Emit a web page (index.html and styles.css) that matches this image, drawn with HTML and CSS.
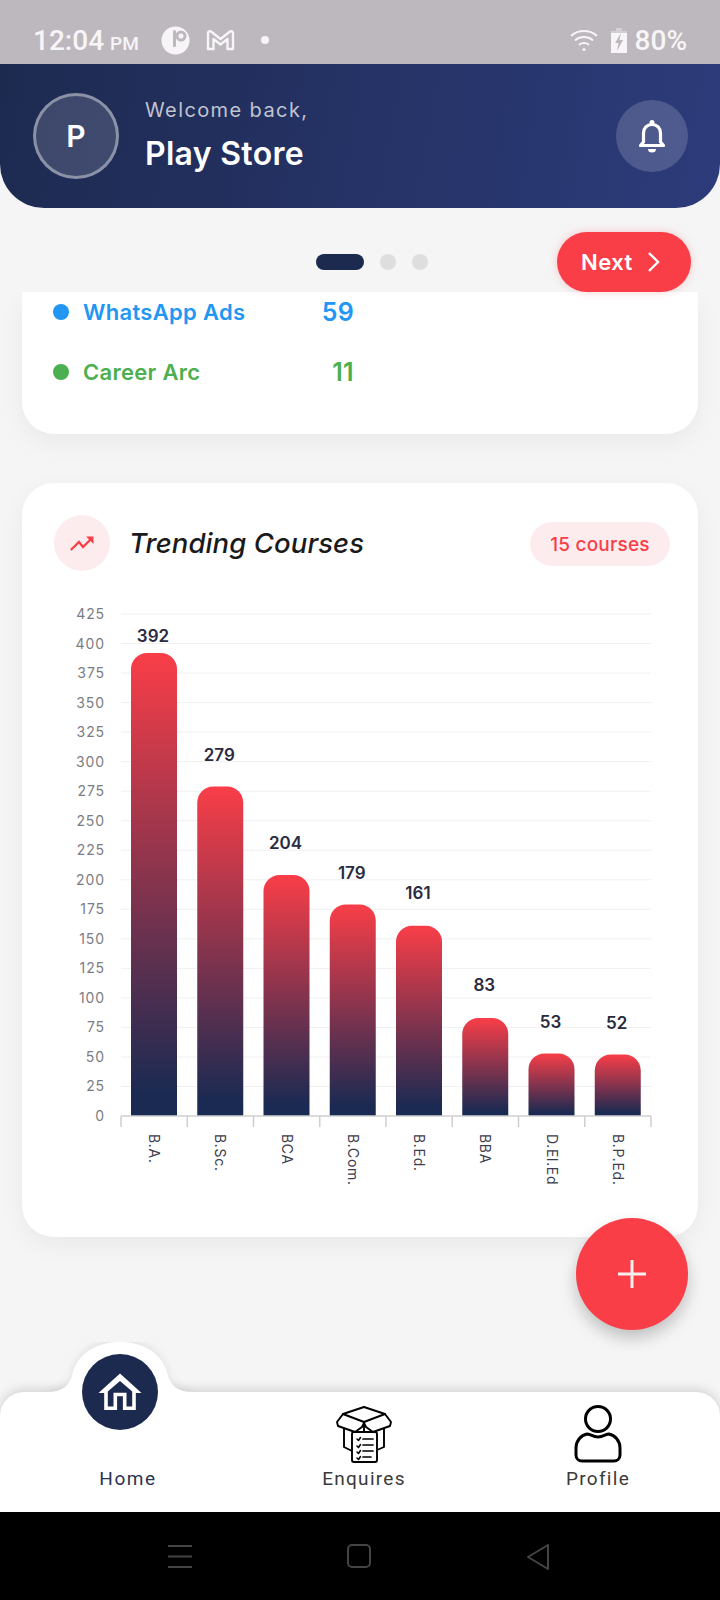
FILE: index.html
```html
<!DOCTYPE html>
<html lang="en">
<head>
<meta charset="utf-8">
<title>Dashboard</title>
<link rel="stylesheet" href="styles.css">
</head>
<body>
<div class="app">
  <div class="status">
    <div class="status-left">
      <span class="time">12:04<small>PM</small></span>
      <svg class="st-icon" width="29" height="29" viewBox="0 0 29 29"><circle cx="14.5" cy="14.5" r="14" fill="#f7f5f7"/><rect x="12" y="4" width="3" height="17" rx="1.5" fill="#bdb8bd"/><circle cx="20" cy="10" r="5.5" fill="#bdb8bd"/><circle cx="20" cy="10" r="2.5" fill="#f7f5f7"/></svg>
      <svg class="st-icon" width="29" height="22" viewBox="0 0 29 22"><path d="M2 20V4.500Q2 1.500 5 2.500L14.500 10 24 2.500Q27 1.500 27 4.500V20H21.500V10L14.500 15.500 7.500 10V20z" fill="none" stroke="#f7f5f7" stroke-width="2.400" stroke-linejoin="round"/></svg>
      <span class="st-dot"></span>
    </div>
    <div class="status-right">
      <svg width="28" height="24" viewBox="0 0 28 24" fill="none" stroke="#f7f5f7" stroke-width="1.800" stroke-linecap="round"><path d="M1.500 7.500C8 1.500 20 1.500 26.500 7.500"/><path d="M5.500 12C10 8 18 8 22.500 12"/><path d="M9.500 16.500C12 14.500 16 14.500 18.500 16.500"/><circle cx="14" cy="21.500" r="1.500" fill="#f7f5f7" stroke="none"/></svg>
      <svg width="16" height="25" viewBox="0 0 16 25"><path d="M5 0h6v3h5v2H0V3h5z" fill="#d3cfd3"/><path d="M0 5h16v20H0z" fill="#f7f5f7"/><path d="M10 5L4 15h3.500L6 23l6-11H8.500z" fill="#bdb8bd"/></svg>
      <span class="battery">80%</span>
    </div>
  </div>

  <header class="hero">
    <div class="avatar">P</div>
    <div class="greeting">
      <div class="welcome">Welcome back,</div>
      <div class="name">Play Store</div>
    </div>
    <button class="bell" type="button" aria-label="Notifications">
      <svg width="26" height="33" viewBox="0 0 26 33" fill="none" stroke="#fff" stroke-width="3.200" stroke-linejoin="round"><path d="M4.500 22V13C4.500 8 8 4.500 13 4.500S21.500 8 21.500 13V22L24.500 25.500H1.500z"/><circle cx="13" cy="2.500" r="2.500" fill="#fff" stroke="none"/><path d="M9 29h8a4 3.500 0 0 1-8 0z" fill="#fff" stroke="none"/></svg>
    </button>
  </header>

  <div class="pager">
    <div class="dots">
      <span class="dot dot-active"></span>
      <span class="dot"></span>
      <span class="dot"></span>
    </div>
    <button class="next" type="button">Next
      <svg width="14" height="22" viewBox="0 0 14 22" fill="none" stroke="#fff" stroke-width="2.400"><path d="M2 2l9 9-9 9"/></svg>
    </button>
  </div>

  <main class="scroll">
    <section class="card card-sources">
      <div class="source source-blue"><span class="bullet"></span><span class="source-name">WhatsApp Ads</span><span class="source-num">59</span></div>
      <div class="source source-green"><span class="bullet"></span><span class="source-name">Career Arc</span><span class="source-num">11</span></div>
    </section>

    <section class="card card-trending">
      <div class="card-head">
        <span class="trend-icon">
          <svg width="24" height="15" viewBox="0 0 24 15"><path d="M.8 14L9 6l4 5 8.500-8.500" fill="none" stroke="#f93e48" stroke-width="2.200"/><path d="M16 .5h7.500V8z" fill="#f93e48"/></svg>
        </span>
        <h2 class="card-title">Trending Courses</h2>
        <span class="pill">15 courses</span>
      </div>
      <svg class="chart" width="676" height="620" viewBox="0 0 676 620">
        <defs>
          <linearGradient id="barFill" x1="0" y1="0" x2="0" y2="1">
            <stop offset="0" stop-color="#f93e48"/>
            <stop offset=".95" stop-color="#1b2a52"/>
          </linearGradient>
        </defs>
        <g id="grid" class="grid"></g>
        <g id="yLabels" class="y-label"></g>
        <g id="bars"></g>
        <g id="ticks" class="tick"></g>
        <g id="vals" class="val"></g>
        <g id="xLabels" class="x-label"></g>
      </svg>
    </section>
  </main>

  <button class="fab" type="button" aria-label="Add">
    <svg width="28" height="28" viewBox="0 0 28 28" fill="#f7eeee"><rect x="12.500" y="0" width="3" height="28"/><rect x="0" y="12.500" width="28" height="3"/></svg>
  </button>

  <nav class="tabs">
    <svg class="bump" width="240" height="50" viewBox="0 0 240 50"><path class="bump-shape" d="M18 50c14 0 22-6 25-20C49 10 68 0 90 0s41 10 47 30c3 14 11 20 25 20v4H18z" fill="#fff"/></svg>
    <div class="home-disc">
      <svg width="44" height="38" viewBox="0 0 44 38"><path d="M22 .5L43.500 20H36L22 8 8 20H.5z" fill="#fff"/><path d="M8 17V35.200H17.300V21.500H26.700V35.200H36V17" fill="none" stroke="#fff" stroke-width="3.600"/></svg>
    </div>
    <a class="tab tab-home"><span class="tab-label">Home</span></a>
    <a class="tab">
      <svg width="58" height="58" viewBox="0 0 58 58" fill="none" stroke="#000" stroke-width="1.900" stroke-linejoin="round" stroke-linecap="round">
        <path d="M29 2L50 9 56 17 55 21 38 27 31 22 29 18 27 22 20 27 3 21 2 17 8 9z"/>
        <path d="M8 9L29 17 50 9"/><path d="M29 18v9"/>
        <path d="M9 24V42L17 46M49 24V42L42 45"/>
        <rect x="17" y="27" width="25" height="30" rx="2" fill="#fff"/>
        <path d="M22 34l1.500 1.500 2-3M22 41l1.500 1.500 2-3M22 47l1.500 1.500 2-3M22 53l1.500 1.500 2-3" stroke-width="1.500"/>
        <path d="M28 34h10M28 40h10M28 46h10M28 52h8" stroke-width="1.700"/>
      </svg>
      <span class="tab-label">Enquires</span>
    </a>
    <a class="tab">
      <svg width="48" height="58" viewBox="0 0 48 58" fill="none" stroke="#000" stroke-width="3"><circle cx="24" cy="14" r="12.500"/><path d="M13 29c-6 1-11 7-11 14v7c0 4 3 6 6 6h32c3 0 6-2 6-6v-7c0-7-5-13-11-14-3 0-6 3-11 3s-8-3-11-3z" stroke-linejoin="round"/></svg>
      <span class="tab-label">Profile</span>
    </a>
  </nav>

  <div class="sysnav">
    <svg width="24" height="24" viewBox="0 0 24 24" stroke="#444" stroke-width="2"><path d="M0 2h24M0 12.500h24M0 23h24"/></svg>
    <svg width="24" height="24" viewBox="0 0 24 24" fill="none" stroke="#444" stroke-width="2"><rect x="1" y="1" width="22" height="22" rx="4"/></svg>
    <svg class="sys-back" width="24" height="28" viewBox="0 0 24 28" fill="none" stroke="#444" stroke-width="2" stroke-linejoin="round"><path d="M22 2L2 14l20 12z"/></svg>
  </div>
</div>
<script src="chart.js"></script>
</body>
</html>
```
FILE: styles.css
```css
* { box-sizing: border-box; }
html, body { margin: 0; padding: 0; }
body { background: #f5f5f5; font-family: Inter, "Liberation Sans", sans-serif; }
.app { position: relative; width: 720px; height: 1600px; display: flex; flex-direction: column; overflow: hidden; background: #f5f5f5; }

.status { height: 64px; flex: none; background: #bdb8bd; color: #f7f5f7; display: flex; justify-content: space-between; align-items: center; padding: 16px 33px 0; font-family: Roboto, sans-serif; }
.status-left { display: flex; align-items: center; }
.status-right { display: flex; align-items: center; gap: 13px; }
.time { font-size: 28px; font-weight: 500; margin-right: 22px; margin-top: 2px; line-height: 1; }
.time small { font-size: 19px; font-weight: 500; margin-left: 6px; }
.st-icon { margin-right: 14px; }
.st-icon + .st-icon { margin-right: 26px; margin-left: 2px; }
.st-dot { width: 8px; height: 8px; border-radius: 50%; background: #f7f5f7; }
.battery { font-size: 28px; font-weight: 500; line-height: 1; margin-left: -5px; margin-top: 2px; }

.hero { height: 144px; flex: none; background: linear-gradient(100deg, #1d2a50, #2d3b7b); border-radius: 0 0 44px 44px; display: flex; align-items: center; padding: 0 32px 0 33px; color: #fff; }
.avatar { width: 86px; height: 86px; border-radius: 50%; border: 3px solid rgba(255,255,255,.4); background: rgba(255,255,255,.14); display: flex; align-items: center; justify-content: center; font-size: 30px; font-weight: 600; }
.greeting { margin-left: 26px; flex: 1; padding-top: 4px; }
.welcome { font-size: 20px; letter-spacing: 1.400px; color: rgba(255,255,255,.72); line-height: 24px; margin-top: -4px; }
.name { font-size: 32px; font-weight: 600; letter-spacing: .3px; line-height: 40px; margin-top: 12px; }
.bell { width: 72px; height: 72px; border-radius: 50%; border: 0; padding: 0; background: rgba(255,255,255,.17); display: flex; align-items: center; justify-content: center; }

.pager { position: relative; z-index: 2; height: 84px; flex: none; background: #f5f5f5; display: flex; align-items: center; justify-content: center; padding-left: 24px; }
.dots { display: flex; gap: 16px; align-items: center; margin-top: 24px; }
.dot { width: 16px; height: 16px; border-radius: 50%; background: #dedede; }
.dot-active { width: 48px; border-radius: 8px; background: #1d2a50; }
.next { position: absolute; right: 29px; top: 24px; width: 134px; height: 60px; padding: 0 0 0 24px; border: 0; border-radius: 30px; background: #f93e48; color: #fff; font: 600 22px Inter, sans-serif; letter-spacing: .5px; display: flex; align-items: center; gap: 14px; box-shadow: 0 0 8px rgba(249,62,72,.25); }

.scroll { flex: 1; min-height: 0; padding: 0 22px; display: flex; flex-direction: column; gap: 49px; overflow: hidden; }
.card { background: #fff; box-shadow: 0 8px 24px rgba(0,0,0,.05); flex: none; }
.card-sources { height: 142px; border-radius: 0 0 32px 32px; padding: 0 32px 0 31px; }
.source { display: flex; align-items: center; height: 60px; font-size: 22px; font-weight: 600; letter-spacing: .3px; margin-top: -10px; }
.source + .source { margin-top: 0; }
.bullet { width: 16px; height: 16px; border-radius: 50%; background: currentColor; margin-right: 14px; }
.source-name { width: 271px; }
.source-num { width: 0; flex: none; font-size: 25px; display: flex; justify-content: flex-end; }
.source-blue { color: #2196f3; }
.source-green { color: #4caf50; }

.card-trending { height: 754px; border-radius: 32px; }
.card-head { display: flex; align-items: center; padding: 32px 28px 0 32px; }
.trend-icon { width: 56px; height: 56px; border-radius: 50%; background: #fdeced; display: flex; align-items: center; justify-content: center; }
.card-title { flex: 1; margin: 0 0 0 19px; font-size: 27.500px; font-weight: 500; font-style: italic; letter-spacing: .1px; color: #1a1a1a; }
.pill { width: 140px; height: 44px; margin-top: 2px; border-radius: 22px; background: #fdeced; color: #f93e48; font-size: 19px; font-weight: 500; letter-spacing: .2px; display: flex; align-items: center; justify-content: center; }

.chart { display: block; margin-top: 25px; }
.grid line { stroke: #f0f0f0; stroke-width: 1; }
.tick line { stroke: #cfcfcf; stroke-width: 1.500; }
.y-label text { fill: #7c7c84; font-size: 14px; letter-spacing: .9px; text-anchor: end; }
.val text { fill: #2a2a40; font-size: 17px; font-weight: 600; text-anchor: middle; }
.x-label text { fill: #3d3d4c; font-size: 14px; letter-spacing: .7px; }

.fab { position: absolute; left: 576px; top: 1218px; z-index: 3; width: 112px; height: 112px; padding: 0; border: 0; border-radius: 50%; background: #f93e48; display: flex; align-items: center; justify-content: center; box-shadow: 0 8px 16px rgba(0,0,0,.22); }

.tabs { position: relative; height: 120px; flex: none; background: #fff; border-radius: 24px 24px 0 0; box-shadow: 0 -2px 12px rgba(0,0,0,.15); display: grid; grid-template-columns: 234px 260px 208px; }
.bump { position: absolute; left: 30px; top: -50px; }
.bump-shape { filter: drop-shadow(0 -2px 4px rgba(0,0,0,.08)); }
.home-disc { position: absolute; left: 82px; top: -38px; width: 76px; height: 76px; border-radius: 50%; background: #1d2a50; display: flex; align-items: center; justify-content: center; }
.tab { position: relative; display: flex; flex-direction: column; align-items: center; justify-content: flex-end; padding-bottom: 22px; gap: 5px; }
.tab-label { font-family: Roboto, sans-serif; font-size: 19px; letter-spacing: 1.300px; color: #3a3a3a; line-height: 22px; }
.tab-home { padding-left: 22px; }
.tab-home .tab-label { color: #2a3352; letter-spacing: 1.600px; }

.sysnav { height: 88px; flex: none; background: #000; display: flex; align-items: center; padding: 0 170px 0 168px; justify-content: space-between; }
.sys-back { margin-top: 1px; }
```
FILE: chart.js
```js
var NS = 'http://www.w3.org/2000/svg';
// chart coordinates are relative to the svg, whose left edge is at 22 and top at 596
var X0 = 99, AXIS = 520, STEP = 29.53, COL = 66.25;
var data = [['B.A.',392,17],['B.Sc.',279,31],['BCA',204,32],['B.Com.',179,32],['B.Ed.',161,33],['BBA',83,33],['D.El.Ed',53,31],['B.P.Ed.',52,32]];
function el(parent, name, attrs, text) {
  var n = document.createElementNS(NS, name);
  for (var k in attrs) n.setAttribute(k, attrs[k]);
  if (text !== undefined) n.textContent = text;
  document.getElementById(parent).appendChild(n);
  return n;
}
for (var i = 0; i <= 17; i++) {
  var y = AXIS - i * STEP;
  if (i) el('grid', 'line', {x1: X0, x2: X0 + COL * 8, y1: y, y2: y});
  el('yLabels', 'text', {x: 83, y: y + 5}, i * 25);
}
el('ticks', 'line', {x1: X0, x2: X0 + COL * 8, y1: AXIS, y2: AXIS});
for (var t = 0; t <= 8; t++) {
  el('ticks', 'line', {x1: X0 + t * COL, x2: X0 + t * COL, y1: AXIS, y2: AXIS + 11});
}
data.forEach(function (d, i) {
  var h = d[1] / 25 * STEP, left = X0 + 10 + i * COL, w = 46, r = 16, top = AXIS - h;
  el('bars', 'path', {fill: 'url(#barFill)', d: 'M' + left + ' ' + AXIS + 'V' + (top + r) + 'A' + r + ' ' + r + ' 0 0 1 ' + (left + r) + ' ' + top + 'H' + (left + w - r) + 'A' + r + ' ' + r + ' 0 0 1 ' + (left + w) + ' ' + (top + r) + 'V' + AXIS + 'z'});
  el('vals', 'text', {x: left + 22, y: top - d[2] + 6}, d[1]);
  var cx = left + 22 - 4, cy = AXIS + 18;
  el('xLabels', 'text', {transform: 'translate(' + cx + ' ' + cy + ') rotate(90)'}, d[0]);
});
```
